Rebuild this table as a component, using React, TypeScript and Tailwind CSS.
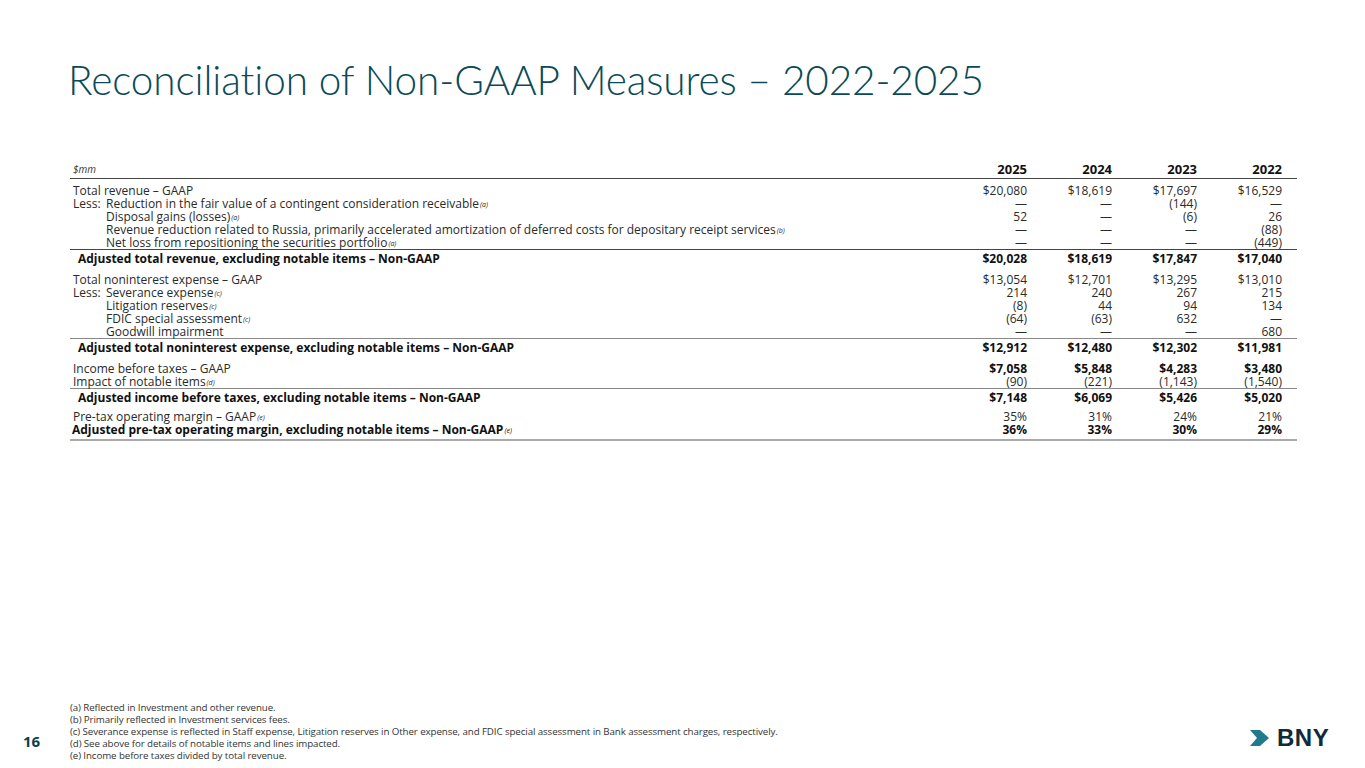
import React from "react";

type Row = {
  label: React.ReactNode;
  vals: string[];
  kind?: "plain" | "less" | "sub" | "bold" | "boldPlain";
  boldVals?: boolean;
};

const Sup = ({ t }: { t: string }) => (
  <sup className="relative top-[-1px] ml-[1px] text-[7px] font-normal italic">({t})</sup>
);

const group1: Row[] = [
  { label: "Total revenue – GAAP", vals: ["$20,080", "$18,619", "$17,697", "$16,529"] },
  {
    label: (
      <>
        Reduction in the fair value of a contingent consideration receivable
        <Sup t="a" />
      </>
    ),
    vals: ["—", "—", "(144)", "—"],
    kind: "less",
  },
  { label: <>Disposal gains (losses)<Sup t="a" /></>, vals: ["52", "—", "(6)", "26"], kind: "sub" },
  {
    label: (
      <>
        Revenue reduction related to Russia, primarily accelerated amortization of deferred costs for
        depositary receipt services
        <Sup t="b" />
      </>
    ),
    vals: ["—", "—", "—", "(88)"],
    kind: "sub",
  },
  {
    label: <>Net loss from repositioning the securities portfolio<Sup t="a" /></>,
    vals: ["—", "—", "—", "(449)"],
    kind: "sub",
  },
];

const group2: Row[] = [
  { label: "Total noninterest expense – GAAP", vals: ["$13,054", "$12,701", "$13,295", "$13,010"] },
  { label: <>Severance expense<Sup t="c" /></>, vals: ["214", "240", "267", "215"], kind: "less" },
  { label: <>Litigation reserves<Sup t="c" /></>, vals: ["(8)", "44", "94", "134"], kind: "sub" },
  { label: <>FDIC special assessment<Sup t="c" /></>, vals: ["(64)", "(63)", "632", "—"], kind: "sub" },
  { label: "Goodwill impairment", vals: ["—", "—", "—", "680"], kind: "sub" },
];

function DataRow({ row }: { row: Row }) {
  const kind = row.kind ?? "plain";
  const bold = kind === "bold" || kind === "boldPlain";
  return (
    <div
      className={`grid grid-cols-[1fr_85px_85px_85px_85px] items-center pr-[15px] leading-[13px] ${
        bold ? "font-bold text-[#111]" : "text-[#2a2a2a]"
      } ${kind === "bold" ? "h-[16px]" : "h-[13px]"}`}
    >
      <div className="flex whitespace-nowrap">
        {kind === "less" && <span className="w-[36px] shrink-0 pl-[3px]">Less:</span>}
        {kind === "sub" && <span className="w-[36px] shrink-0" />}
        {kind === "bold" && <span className="w-[8px] shrink-0" />}
        {kind === "plain" && <span className="w-[3px] shrink-0" />}
        {kind === "boldPlain" && <span className="w-[2px] shrink-0" />}
        <span>{row.label}</span>
      </div>
      {row.vals.map((v, i) => (
        <div key={i} className={`text-right ${row.boldVals ? "font-bold text-[#111]" : ""}`}>
          {v}
        </div>
      ))}
    </div>
  );
}

export default function App() {
  return (
    <div
      className="relative h-[768px] w-[1365px] overflow-hidden bg-white"
      style={{ fontFamily: "'Open Sans', Lato, sans-serif" }}
    >
      <h1
        className="pl-[68px] pt-[52px] text-[40.5px] leading-[56px] font-light tracking-[-0.1px] text-[#0b4a57]"
        style={{ fontFamily: "Lato, 'Open Sans', sans-serif", fontVariantLigatures: "none" }}
      >
        Reconciliation of Non-GAAP Measures – 2022-2025
      </h1>

      <div className="ml-[70px] mt-[52px] w-[1227px] text-[12px]">
        <div className="grid h-[19px] grid-cols-[1fr_85px_85px_85px_85px] items-center border-b border-[#444] pr-[15px]">
          <div className="pl-[3px] text-[10px] italic text-[#333]">$mm</div>
          {["2025", "2024", "2023", "2022"].map((y) => (
            <div key={y} className="text-right text-[13px] font-bold text-[#111]">
              {y}
            </div>
          ))}
        </div>

        <div className="pt-[5px]">
          {group1.map((r, i) => (
            <DataRow key={i} row={r} />
          ))}
        </div>
        <div className="border-t border-[#444]">
          <DataRow
            row={{
              label: "Adjusted total revenue, excluding notable items – Non-GAAP",
              vals: ["$20,028", "$18,619", "$17,847", "$17,040"],
              kind: "bold",
            }}
          />
        </div>

        <div className="pt-[7px]">
          {group2.map((r, i) => (
            <DataRow key={i} row={r} />
          ))}
        </div>
        <div className="border-t border-[#888]">
          <DataRow
            row={{
              label: "Adjusted total noninterest expense, excluding notable items – Non-GAAP",
              vals: ["$12,912", "$12,480", "$12,302", "$11,981"],
              kind: "bold",
            }}
          />
        </div>

        <div className="pt-[7px]">
          <DataRow
            row={{
              label: "Income before taxes – GAAP",
              vals: ["$7,058", "$5,848", "$4,283", "$3,480"],
              boldVals: true,
            }}
          />
          <DataRow
            row={{
              label: <>Impact of notable items<Sup t="d" /></>,
              vals: ["(90)", "(221)", "(1,143)", "(1,540)"],
            }}
          />
        </div>
        <div className="border-t border-[#888]">
          <DataRow
            row={{
              label: "Adjusted income before taxes, excluding notable items – Non-GAAP",
              vals: ["$7,148", "$6,069", "$5,426", "$5,020"],
              kind: "bold",
            }}
          />
        </div>

        <div className="border-b-2 border-[#aaa] pb-[3px] pt-[5px]">
          <DataRow
            row={{
              label: <>Pre-tax operating margin – GAAP<Sup t="e" /></>,
              vals: ["35%", "31%", "24%", "21%"],
            }}
          />
          <DataRow
            row={{
              label: (
                <>
                  Adjusted pre-tax operating margin, excluding notable items – Non-GAAP
                  <Sup t="e" />
                </>
              ),
              vals: ["36%", "33%", "30%", "29%"],
              kind: "boldPlain",
            }}
          />
        </div>
      </div>

      <div className="absolute bottom-[6px] left-[70px] text-[9.75px] leading-[12px] tracking-[-0.1px] text-[#333]">
        <div>(a) Reflected in Investment and other revenue.</div>
        <div>(b) Primarily reflected in Investment services fees.</div>
        <div>
          (c) Severance expense is reflected in Staff expense, Litigation reserves in Other expense, and FDIC
          special assessment in Bank assessment charges, respectively.
        </div>
        <div>(d) See above for details of notable items and lines impacted.</div>
        <div>(e) Income before taxes divided by total revenue.</div>
      </div>

      <div className="absolute left-[23px] top-[730px] text-[15px] font-bold text-[#0e3f4c]">16</div>

      <div className="absolute left-[1250px] top-[729px] flex items-center gap-[8px]">
        <svg width="19" height="16" viewBox="0 0 19 16">
          <path d="M0 0 H10 L19 8 L10 16 H0 L7 8 Z" fill="#1f7a8c" />
        </svg>
        <span
          className="text-[24px] font-black leading-[18px] tracking-[0.5px] text-[#0f2a3d]"
          style={{ fontFamily: "'Liberation Sans', Arial, sans-serif" }}
        >
          BNY
        </span>
      </div>
    </div>
  );
}
